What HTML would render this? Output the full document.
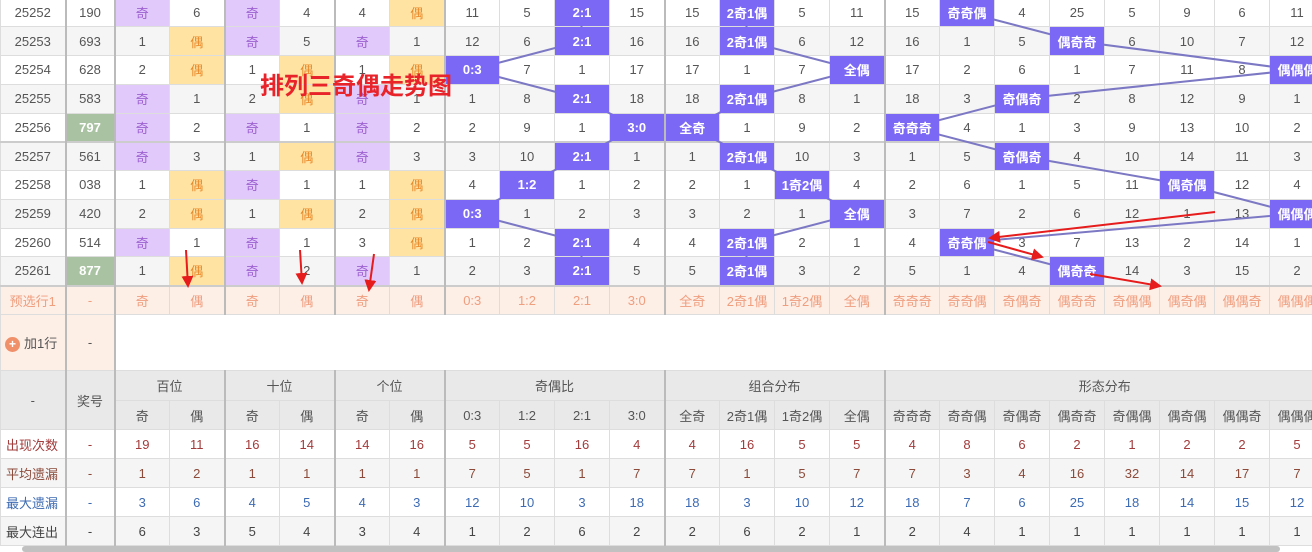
<!DOCTYPE html>
<html><head><meta charset="utf-8"><style>
*{margin:0;padding:0;box-sizing:border-box}
body{width:1312px;height:551px;overflow:hidden;background:#fff;font-family:"Liberation Sans","Noto Sans CJK SC",sans-serif;font-size:13px;color:#555;position:relative}
#wrap{position:absolute;left:0;top:-2.5px;width:1324px}
table{border-collapse:collapse;table-layout:fixed;width:1324px}
td{border:1px solid #ddd;text-align:center;vertical-align:middle;height:28.75px;white-space:nowrap;overflow:hidden;padding:0}
tr.g td{background:#f5f5f5}
td.b{border-left:2px solid #bbb}
td.p{background:#e2c9fb!important;color:#9c5fd0}
td.y{background:#ffe3a3!important;color:#e98a2b}
td.h{background:#7b68f5!important;color:#fff;font-weight:bold;position:relative;z-index:2}
td.gr{background:#a9c3a2!important;color:#fff;font-weight:bold}
tr.sep td{border-top:2px solid #ccc}
tr.pre td{background:#fdeee6;color:#ef9e7e;height:29px;border-top:2px solid #ccc}
tr.add td{height:56px;background:#fff}
tr.add td.f{background:#fdeee6;color:#555}
tr.hd td{background:#e9e9e9;color:#555;height:30px}
tr.hd2 td{background:#e9e9e9;color:#555;height:29px}
tr.s td{height:29px}
.r1 td{color:#a23b3b}.r2 td{color:#8b4a3a}.r3 td{color:#3d6bb3}.r4 td{color:#444}
.r1 td:first-child,.r2 td:first-child,.r3 td:first-child,.r4 td:first-child{text-align:left;padding-left:5px}
#lines{position:absolute;left:0;top:0;z-index:1;pointer-events:none}
#arrows{position:absolute;left:0;top:0;z-index:5;pointer-events:none}
.title{position:absolute;left:260px;top:66px;font-size:24px;font-weight:bold;color:#e8232a;z-index:6;letter-spacing:0}
.plus{display:inline-block;width:15px;height:15px;border-radius:50%;background:#f0906a;color:#fff;font-size:12px;line-height:15px;text-align:center;vertical-align:middle;margin-right:4px;font-weight:bold}
.scroll{position:absolute;left:22px;top:546px;width:1258px;height:6px;background:#c1c1c1;border-radius:3px;z-index:7}
</style></head><body>
<div id="wrap">
<table>
<colgroup><col style="width:65px"><col style="width:49px"><col span="22" style="width:55px"></colgroup>
<tr><td>25252</td><td class="b">190</td><td class="b p">奇</td><td>6</td><td class="b p">奇</td><td>4</td><td class="b">4</td><td class="y">偶</td><td class="b">11</td><td>5</td><td class="h">2:1</td><td>15</td><td class="b">15</td><td class="h">2奇1偶</td><td>5</td><td>11</td><td class="b">15</td><td class="h">奇奇偶</td><td>4</td><td>25</td><td>5</td><td>9</td><td>6</td><td>11</td></tr>
<tr class="g"><td>25253</td><td class="b">693</td><td class="b">1</td><td class="y">偶</td><td class="b p">奇</td><td>5</td><td class="b p">奇</td><td>1</td><td class="b">12</td><td>6</td><td class="h">2:1</td><td>16</td><td class="b">16</td><td class="h">2奇1偶</td><td>6</td><td>12</td><td class="b">16</td><td>1</td><td>5</td><td class="h">偶奇奇</td><td>6</td><td>10</td><td>7</td><td>12</td></tr>
<tr><td>25254</td><td class="b">628</td><td class="b">2</td><td class="y">偶</td><td class="b">1</td><td class="y">偶</td><td class="b">1</td><td class="y">偶</td><td class="b h">0:3</td><td>7</td><td>1</td><td>17</td><td class="b">17</td><td>1</td><td>7</td><td class="h">全偶</td><td class="b">17</td><td>2</td><td>6</td><td>1</td><td>7</td><td>11</td><td>8</td><td class="h">偶偶偶</td></tr>
<tr class="g"><td>25255</td><td class="b">583</td><td class="b p">奇</td><td>1</td><td class="b">2</td><td class="y">偶</td><td class="b p">奇</td><td>1</td><td class="b">1</td><td>8</td><td class="h">2:1</td><td>18</td><td class="b">18</td><td class="h">2奇1偶</td><td>8</td><td>1</td><td class="b">18</td><td>3</td><td class="h">奇偶奇</td><td>2</td><td>8</td><td>12</td><td>9</td><td>1</td></tr>
<tr><td>25256</td><td class="b gr">797</td><td class="b p">奇</td><td>2</td><td class="b p">奇</td><td>1</td><td class="b p">奇</td><td>2</td><td class="b">2</td><td>9</td><td>1</td><td class="h">3:0</td><td class="b h">全奇</td><td>1</td><td>9</td><td>2</td><td class="b h">奇奇奇</td><td>4</td><td>1</td><td>3</td><td>9</td><td>13</td><td>10</td><td>2</td></tr>
<tr class="g sep"><td>25257</td><td class="b">561</td><td class="b p">奇</td><td>3</td><td class="b">1</td><td class="y">偶</td><td class="b p">奇</td><td>3</td><td class="b">3</td><td>10</td><td class="h">2:1</td><td>1</td><td class="b">1</td><td class="h">2奇1偶</td><td>10</td><td>3</td><td class="b">1</td><td>5</td><td class="h">奇偶奇</td><td>4</td><td>10</td><td>14</td><td>11</td><td>3</td></tr>
<tr><td>25258</td><td class="b">038</td><td class="b">1</td><td class="y">偶</td><td class="b p">奇</td><td>1</td><td class="b">1</td><td class="y">偶</td><td class="b">4</td><td class="h">1:2</td><td>1</td><td>2</td><td class="b">2</td><td>1</td><td class="h">1奇2偶</td><td>4</td><td class="b">2</td><td>6</td><td>1</td><td>5</td><td>11</td><td class="h">偶奇偶</td><td>12</td><td>4</td></tr>
<tr class="g"><td>25259</td><td class="b">420</td><td class="b">2</td><td class="y">偶</td><td class="b">1</td><td class="y">偶</td><td class="b">2</td><td class="y">偶</td><td class="b h">0:3</td><td>1</td><td>2</td><td>3</td><td class="b">3</td><td>2</td><td>1</td><td class="h">全偶</td><td class="b">3</td><td>7</td><td>2</td><td>6</td><td>12</td><td>1</td><td>13</td><td class="h">偶偶偶</td></tr>
<tr><td>25260</td><td class="b">514</td><td class="b p">奇</td><td>1</td><td class="b p">奇</td><td>1</td><td class="b">3</td><td class="y">偶</td><td class="b">1</td><td>2</td><td class="h">2:1</td><td>4</td><td class="b">4</td><td class="h">2奇1偶</td><td>2</td><td>1</td><td class="b">4</td><td class="h">奇奇偶</td><td>3</td><td>7</td><td>13</td><td>2</td><td>14</td><td>1</td></tr>
<tr class="g"><td>25261</td><td class="b gr">877</td><td class="b">1</td><td class="y">偶</td><td class="b p">奇</td><td>2</td><td class="b p">奇</td><td>1</td><td class="b">2</td><td>3</td><td class="h">2:1</td><td>5</td><td class="b">5</td><td class="h">2奇1偶</td><td>3</td><td>2</td><td class="b">5</td><td>1</td><td>4</td><td class="h">偶奇奇</td><td>14</td><td>3</td><td>15</td><td>2</td></tr>
<tr class="pre"><td>预选行1</td><td class="b">-</td><td class="b">奇</td><td>偶</td><td class="b">奇</td><td>偶</td><td class="b">奇</td><td>偶</td><td class="b">0:3</td><td>1:2</td><td>2:1</td><td>3:0</td><td class="b">全奇</td><td>2奇1偶</td><td>1奇2偶</td><td>全偶</td><td class="b">奇奇奇</td><td>奇奇偶</td><td>奇偶奇</td><td>偶奇奇</td><td>奇偶偶</td><td>偶奇偶</td><td>偶偶奇</td><td>偶偶偶</td></tr>
<tr class="add"><td class="f" style="text-align:left;padding-left:4px"><span class="plus">+</span>加1行</td><td class="f b">-</td><td class="b" colspan="22"></td></tr>
<tr class="hd"><td rowspan="2">-</td><td rowspan="2" class="b">奖号</td><td class="b" colspan="2">百位</td><td class="b" colspan="2">十位</td><td class="b" colspan="2">个位</td><td class="b" colspan="4">奇偶比</td><td class="b" colspan="4">组合分布</td><td class="b" colspan="8">形态分布</td></tr>
<tr class="hd2"><td class="b">奇</td><td>偶</td><td class="b">奇</td><td>偶</td><td class="b">奇</td><td>偶</td><td class="b">0:3</td><td>1:2</td><td>2:1</td><td>3:0</td><td class="b">全奇</td><td>2奇1偶</td><td>1奇2偶</td><td>全偶</td><td class="b">奇奇奇</td><td>奇奇偶</td><td>奇偶奇</td><td>偶奇奇</td><td>奇偶偶</td><td>偶奇偶</td><td>偶偶奇</td><td>偶偶偶</td></tr>
<tr class="s r1"><td>出现次数</td><td class="b">-</td><td class="b">19</td><td>11</td><td class="b">16</td><td>14</td><td class="b">14</td><td>16</td><td class="b">5</td><td>5</td><td>16</td><td>4</td><td class="b">4</td><td>16</td><td>5</td><td>5</td><td class="b">4</td><td>8</td><td>6</td><td>2</td><td>1</td><td>2</td><td>2</td><td>5</td></tr>
<tr class="s g r2"><td>平均遗漏</td><td class="b">-</td><td class="b">1</td><td>2</td><td class="b">1</td><td>1</td><td class="b">1</td><td>1</td><td class="b">7</td><td>5</td><td>1</td><td>7</td><td class="b">7</td><td>1</td><td>5</td><td>7</td><td class="b">7</td><td>3</td><td>4</td><td>16</td><td>32</td><td>14</td><td>17</td><td>7</td></tr>
<tr class="s r3"><td>最大遗漏</td><td class="b">-</td><td class="b">3</td><td>6</td><td class="b">4</td><td>5</td><td class="b">4</td><td>3</td><td class="b">12</td><td>10</td><td>3</td><td>18</td><td class="b">18</td><td>3</td><td>10</td><td>12</td><td class="b">18</td><td>7</td><td>6</td><td>25</td><td>18</td><td>14</td><td>15</td><td>12</td></tr>
<tr class="s g r4"><td>最大连出</td><td class="b">-</td><td class="b">6</td><td>3</td><td class="b">5</td><td>4</td><td class="b">3</td><td>4</td><td class="b">1</td><td>2</td><td>6</td><td>2</td><td class="b">2</td><td>6</td><td>2</td><td>1</td><td class="b">2</td><td>4</td><td>1</td><td>1</td><td>1</td><td>1</td><td>1</td><td>1</td></tr>
</table>
<svg id="lines" width="1324" height="300">
<g stroke="#7c78c4" stroke-width="2" fill="none">
<polyline points="581.5,14.4 581.5,43.1 471.5,71.9 581.5,100.6 636.5,129.4 581.5,158.1 526.5,186.9 471.5,215.6 581.5,244.4 581.5,273.1"/>
<polyline points="746.5,14.4 746.5,43.1 856.5,71.9 746.5,100.6 691.5,129.4 746.5,158.1 801.5,186.9 856.5,215.6 746.5,244.4 746.5,273.1"/>
<polyline points="966.5,14.4 1076.5,43.1 1296.5,71.9 1021.5,100.6 911.5,129.4 1021.5,158.1 1186.5,186.9 1296.5,215.6 966.5,244.4 1076.5,273.1"/>
</g>
</svg>
</div>
<svg id="arrows" width="1312" height="551">
<defs><marker id="ah" markerWidth="6" markerHeight="6" refX="5" refY="3" orient="auto" markerUnits="strokeWidth"><path d="M0,0 L6,3 L0,6 z" fill="#e61b1b"/></marker></defs>
<g stroke="#e61b1b" stroke-width="2" fill="none" marker-end="url(#ah)">
<line x1="186" y1="250" x2="188" y2="286"/>
<line x1="300" y1="250" x2="302" y2="283"/>
<line x1="374" y1="254" x2="369" y2="290"/>
<line x1="1215" y1="212" x2="990" y2="238"/>
<line x1="988" y1="242" x2="1042" y2="257"/>
<line x1="1090" y1="274" x2="1160" y2="286"/>
</g>
</svg>
<div class="title">排列三奇偶走势图</div>
<div class="scroll"></div>
</body></html>
